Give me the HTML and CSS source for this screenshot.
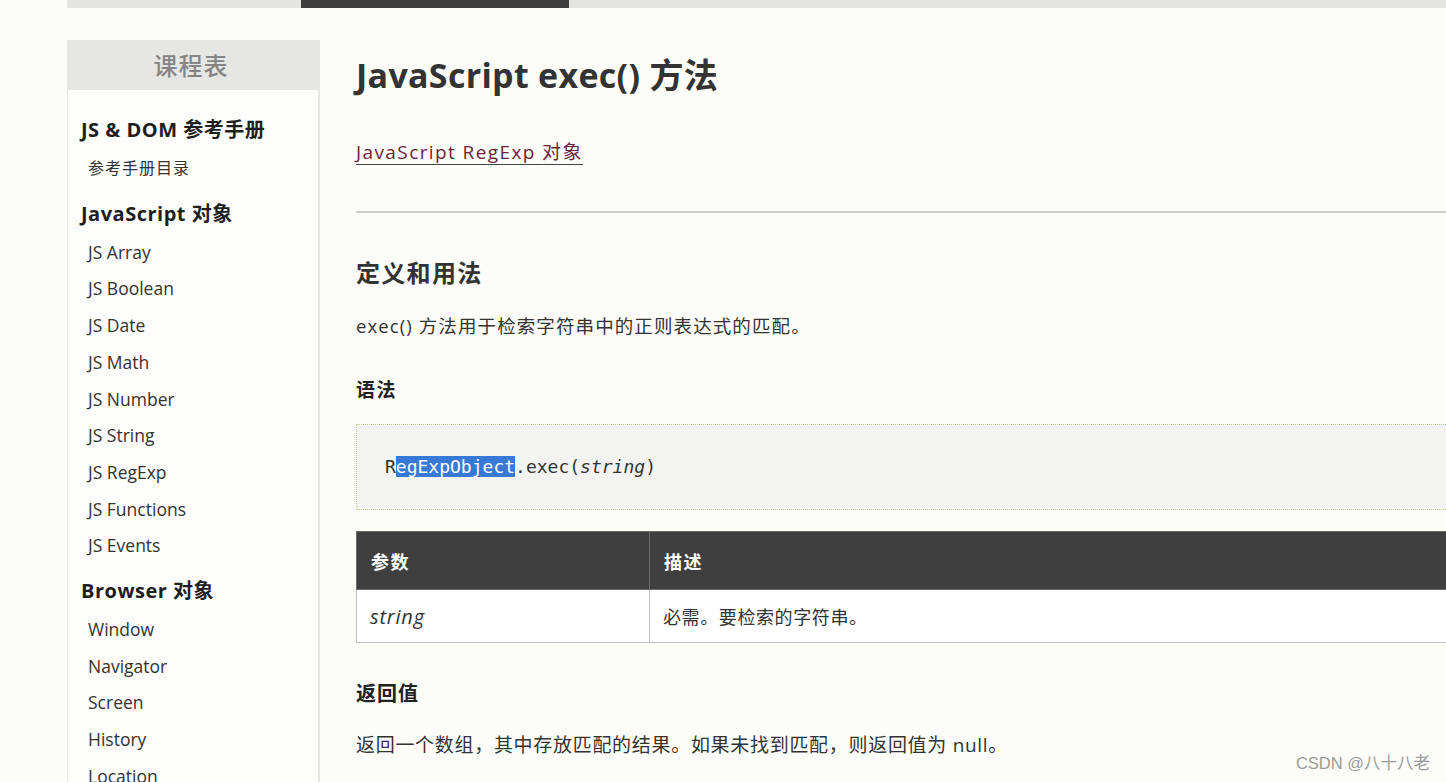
FILE: index.html
```html
<!DOCTYPE html>
<html lang="zh-CN">
<head>
<meta charset="utf-8">
<title>JavaScript exec() 方法</title>
<link rel="stylesheet" href="styles.css">
</head>
<body>
<div class="topbar">
  <div class="seg seg-light-a"></div>
  <div class="seg seg-dark"></div>
  <div class="seg seg-light-b"></div>
</div>
<div class="page">
  <aside class="sidebar">
    <div class="side-head">课程表</div>
    <div class="side-body">
      <div class="side-title first">JS &amp; DOM 参考手册</div>
      <div class="side-item cjk-small">参考手册目录</div>
      <div class="side-title">JavaScript 对象</div>
      <div class="side-item">JS Array</div>
      <div class="side-item">JS Boolean</div>
      <div class="side-item">JS Date</div>
      <div class="side-item">JS Math</div>
      <div class="side-item">JS Number</div>
      <div class="side-item">JS String</div>
      <div class="side-item">JS RegExp</div>
      <div class="side-item">JS Functions</div>
      <div class="side-item">JS Events</div>
      <div class="side-title">Browser 对象</div>
      <div class="side-item">Window</div>
      <div class="side-item">Navigator</div>
      <div class="side-item">Screen</div>
      <div class="side-item">History</div>
      <div class="side-item">Location</div>
    </div>
  </aside>
  <main class="main">
    <h1 class="title">JavaScript exec() 方法</h1>
    <p class="backlink"><a href="#">JavaScript RegExp 对象</a></p>
    <hr class="rule">
    <h2 class="h2">定义和用法</h2>
    <p class="text">exec() 方法用于检索字符串中的正则表达式的匹配。</p>
    <h3 class="h3 syntax">语法</h3>
    <div class="code"><span class="code-line">R<span class="sel">egExpObject</span>.exec(<i>string</i>)</span></div>
    <table class="params">
      <thead>
        <tr><th class="col1">参数</th><th>描述</th></tr>
      </thead>
      <tbody>
        <tr><td class="col1"><i class="arg">string</i></td><td>必需。要检索的字符串。</td></tr>
      </tbody>
    </table>
    <h3 class="h3 ret">返回值</h3>
    <p class="text ret-text">返回一个数组，其中存放匹配的结果。如果未找到匹配，则返回值为 null。</p>
  </main>
</div>
<div class="watermark">CSDN @八十八老</div>
</body>
</html>
```

FILE: styles.css
```css
html, body {
  margin: 0;
  padding: 0;
}
body {
  background: #fcfdf8;
  color: #333;
  font-family: "Open Sans", "Noto Sans CJK SC", sans-serif;
  width: 1446px;
  height: 782px;
  overflow: hidden;
  position: relative;
}
.topbar {
  display: flex;
  height: 8px;
  margin-left: 67px;
}
.seg-light-a { width: 234px; background: #e4e4e2; }
.seg-dark { width: 268px; background: #3e3e3e; }
.seg-light-b { flex: 1; background: #e4e4e2; }

.page {
  display: flex;
  align-items: flex-start;
  margin-top: 32px;
  padding-left: 67px;
}
.sidebar {
  width: 250px;
  flex: none;
  border-left: 1px solid #e6e6e4;
  border-right: 2px solid #e6e6e4;
  background: #fdfdfb;
  height: 760px;
}
.side-head {
  height: 50px;
  line-height: 50px;
  background: #e6e6e4;
  color: #858585;
  text-align: center;
  font-size: 24px;
  letter-spacing: 1px;
  font-family: "Noto Sans CJK SC", sans-serif;
  font-weight: 500;
  padding-right: 4px;
}
.side-body {
  padding: 20px 0 0 13px;
}
.side-title {
  font-weight: 700;
  font-size: 20px;
  line-height: 40px;
  color: #1e1e1e;
  margin-top: 7px;
  letter-spacing: 0.5px;
}
.side-title.first { margin-top: 0; }
.side-item {
  font-size: 17.5px;
  line-height: 36.7px;
  padding-left: 7px;
  color: #333;
}
.side-item.cjk-small { font-size: 16px; letter-spacing: 1px; }

.main {
  margin-left: 36px;
  width: 1150px;
  flex: none;
}
.title {
  margin: 15px 0 0;
  font-size: 34px;
  line-height: 40px;
  font-weight: 700;
  color: #333;
  letter-spacing: 0.3px;
}
.backlink {
  margin: 44px 0 0;
  font-size: 19px;
  line-height: 26px;
  letter-spacing: 1.4px;
}
.backlink a {
  color: #6e1f3a;
  text-decoration: underline;
  text-underline-offset: 5px;
  text-decoration-color: #444;
}
.rule {
  margin: 46px 0 0;
  border: none;
  height: 2px;
  background: #cfcfcd;
}
.h2 {
  margin: 44px 0 0;
  font-size: 24px;
  line-height: 32px;
  font-weight: 700;
  color: #333;
  letter-spacing: 1.3px;
}
.text {
  margin: 24px 0 0;
  font-size: 18.5px;
  line-height: 26px;
  letter-spacing: 1.1px;
}
.h3 {
  margin: 38px 0 0;
  font-size: 19px;
  line-height: 26px;
  font-weight: 700;
  color: #222;
  letter-spacing: 1.5px;
}
.code {
  margin-top: 21px;
  height: 84px;
  background: #f3f3f1;
  border: 1px dotted #b9cf92;
  display: flex;
  align-items: center;
  padding-left: 28px;
}
.code-line {
  font-family: "DejaVu Sans Mono", monospace;
  font-size: 18px;
  color: #333;
  line-height: 26px;
}
.sel {
  background: #3679d6;
  color: #fff;
}
.params {
  margin-top: 21px;
  width: 100%;
  border-collapse: collapse;
  border: 1px solid #c4c4c2;
}
.params th {
  background: #3f3f3f;
  color: #fff;
  text-align: left;
  font-weight: 700;
  font-size: 18px;
  letter-spacing: 1.5px;
  height: 57px;
  padding: 0 0 0 14px;
  border: 1px solid #6a6a6a;
}
.params td {
  background: #fff;
  height: 52px;
  padding: 0 0 0 13px;
  font-size: 18px;
  letter-spacing: 0.6px;
  border: 1px solid #c4c4c2;
}
.params .arg { font-size: 20px; letter-spacing: 0.8px; }
.params .col1 { width: 278px; }
.ret { margin-top: 38px; letter-spacing: 1px; font-size: 20px; }
.ret-text { margin-top: 25px; font-size: 19px; letter-spacing: 0.7px; }

.watermark {
  position: absolute;
  right: 16px;
  bottom: 8px;
  font-family: "Liberation Sans", "Noto Sans CJK SC", sans-serif;
  font-size: 16.5px;
  color: #9a9a9a;
  text-shadow: 0 0 1px #fff;
}
```
